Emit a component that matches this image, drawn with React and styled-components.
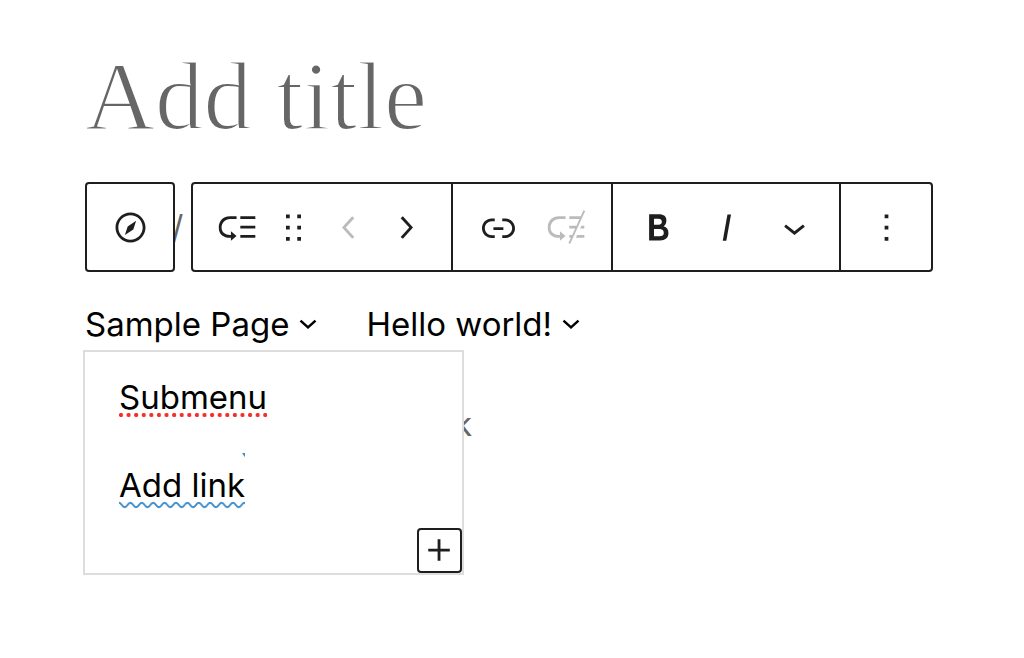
import React from "react";
import styled, { createGlobalStyle } from "styled-components";

const icons = {
  navigation:
    "M12 4c-4.4 0-8 3.6-8 8s3.6 8 8 8 8-3.6 8-8-3.6-8-8-8zm0 14.5c-3.6 0-6.5-2.9-6.5-6.5S8.4 5.5 12 5.5s6.5 2.9 6.5 6.5-2.9 6.5-6.5 6.5zM9 16l4.5-3L15 8.4l-4.5 3L9 16z",
  addSubmenu:
    "M2 12c0 3.6 2.4 5.5 6 5.5h.5V19l3-2.5-3-2.5v2H8c-2.5 0-4.5-1.5-4.5-4s2-4.5 4.5-4.5h3.5V6H8c-3.6 0-6 2.4-6 6zm19.5-1h-8v1.5h8V11zm0 5h-8v1.5h8V16zm0-10h-8v1.5h8V6z",
  removeSubmenu:
    "m13.955 20.748 8-17.5-.91-.416L19.597 6H13.5v1.5h5.411l-1.6 3.5H13.5v1.5h3.126l-1.6 3.5H13.5l.028 1.5h.812l-1.295 2.832.91.416ZM17.675 16l-.686 1.5h4.539L21.5 16h-3.825Zm2.286-5-.686 1.5H21.5V11h-1.54ZM2 12c0 3.58 2.42 5.5 6 5.5h.5V19l3-2.5-3-2.5v2H8c-2.48 0-4.5-1.52-4.5-4S5.52 7.5 8 7.5h3.5V6H8c-3.58 0-6 2.42-6 6Z",
  drag: "M8 7h2V5H8v2zm0 6h2v-2H8v2zm0 6h2v-2H8v2zm6-14v2h2V5h-2zm0 8h2v-2h-2v2zm0 6h2v-2h-2v2z",
  left: "M14.6 7l-1.2-1L8 12l5.4 6 1.2-1-4.6-5z",
  right: "M10.6 6L9.4 7l4.6 5-4.6 5 1.2 1 5.4-6z",
  link: "M15.6 7.2H14v1.5h1.6c2 0 3.7 1.7 3.7 3.7s-1.7 3.7-3.7 3.7H14v1.5h1.6c2.8 0 5.2-2.3 5.2-5.2 0-2.9-2.3-5.2-5.2-5.2zM4.7 12.4c0-2 1.7-3.7 3.7-3.7H10V7.2H8.4c-2.9 0-5.2 2.3-5.2 5.2 0 2.9 2.3 5.2 5.2 5.2H10v-1.5H8.4c-2 0-3.7-1.7-3.7-3.7zm4.6.9h5.3v-1.5H9.3v1.5z",
  bold: "M14.7 11.3c1-.6 1.5-1.6 1.5-3 0-2.3-1.3-3.4-4-3.4H7v14h5.8c1.4 0 2.5-.3 3.3-1 .8-.7 1.2-1.7 1.2-2.9.1-1.9-.8-3.1-2.6-3.7zm-5.1-4h2.3c.6 0 1.1.1 1.4.4.3.3.5.7.5 1.2s-.2 1-.5 1.2c-.3.3-.8.4-1.4.4H9.6V7.3zm4.6 9c-.4.3-1 .4-1.7.4H9.6v-3.9h2.9c.7 0 1.3.2 1.7.5.4.3.6.8.6 1.5s-.2 1.2-.6 1.5z",
  italic: "M12.5 5L10 19h1.9l2.5-14z",
  down: "M17.5 11.6L12 16l-5.5-4.4.9-1.2L12 14l4.5-3.6 1 1.2z",
  more: "M13 19h-2v-2h2v2zm0-6h-2v-2h2v2zm0-6h-2V5h2v2z",
  plus: "M11 12.5V17.5H12.5V12.5H17.5V11H12.5V6H11V11H6V12.5H11Z",
};

const groups = [
  {
    compact: true,
    items: [
      { icon: "addSubmenu", label: "Add submenu" },
      { icon: "drag", label: "Drag" },
      { icon: "left", label: "Move left", disabled: true },
      { icon: "right", label: "Move right" },
    ],
  },
  {
    items: [
      { icon: "link", label: "Link" },
      { icon: "removeSubmenu", label: "Remove submenu", disabled: true },
    ],
  },
  {
    items: [
      { icon: "bold", label: "Bold" },
      { icon: "italic", label: "Italic" },
      { icon: "down", label: "More formats" },
    ],
  },
  { items: [{ icon: "more", label: "Options" }] },
];

const Icon = ({ name }) => (
  <IconSvg viewBox="0 0 24 24" aria-hidden="true">
    <path d={icons[name]} />
  </IconSvg>
);

const Caret = () => (
  <CaretSvg viewBox="0 0 12 12" aria-hidden="true">
    <path d="M1.5 4L6 8L10.5 4" />
  </CaretSvg>
);

const App = () => {
  return (
    <Editor>
      <GlobalStyle />
      <Title type="text" placeholder="Add title" aria-label="Add title" />

      <BlockRow>
        <Placeholder>Type / to choose a block</Placeholder>
        <Toolbar role="toolbar" aria-label="Block tools">
          <ToolbarBox>
            <ParentButton type="button" aria-label="Select Navigation">
              <Icon name="navigation" />
            </ParentButton>
          </ToolbarBox>
          <ToolbarBox>
            {groups.map((group, i) => (
              <ToolbarGroup key={i} $compact={group.compact}>
                {group.items.map((item) => (
                  <ToolButton
                    key={item.icon}
                    type="button"
                    aria-label={item.label}
                    disabled={item.disabled}
                    $compact={group.compact}
                  >
                    <Icon name={item.icon} />
                  </ToolButton>
                ))}
              </ToolbarGroup>
            ))}
          </ToolbarBox>
        </Toolbar>
      </BlockRow>

      <Nav>
        <NavLink href="#sample-page">
          Sample Page
          <Caret />
        </NavLink>
        <NavLink href="#hello-world">
          Hello world!
          <Caret />
        </NavLink>
      </Nav>

      <Below>
        <Submenu>
          <SubmenuLink href="#submenu">
            Submenu
            <DottedLine />
          </SubmenuLink>
          <SubmenuLink href="#add-link">
            Add link
            <WavyLine aria-hidden="true">
              <defs>
                <pattern
                  id="wave"
                  width="11.4"
                  height="8"
                  patternUnits="userSpaceOnUse"
                >
                  <path d="M-2.85 4Q0 -0.4 2.85 4T8.55 4T14.25 4" />
                </pattern>
              </defs>
              <rect width="100%" height="8" fill="url(#wave)" />
            </WavyLine>
            <Tick viewBox="0 0 3 4" aria-hidden="true">
              <path d="M0 0h3v4l-1-1z" />
            </Tick>
          </SubmenuLink>
          <AddButton type="button" aria-label="Add block">
            <Icon name="plus" />
          </AddButton>
        </Submenu>
        <Placeholder>k</Placeholder>
      </Below>
    </Editor>
  );
};

const GlobalStyle = createGlobalStyle`
  * {
    box-sizing: border-box;
  }

  body {
    margin: 0;
    background-color: #fff;
    color: #000;
    font-family: Inter, "Liberation Sans", sans-serif;
    font-size: 33px;
    line-height: 48px;
  }
`;

const Editor = styled.main`
  padding: 40px 84px 0 85px;
`;

const Title = styled.input`
  display: block;
  width: 100%;
  height: 112px;
  margin-bottom: 30px;
  padding: 0;
  border: none;
  outline: none;
  background: none;
  font-family: "Liberation Serif", serif;
  font-size: 97px;
  font-weight: 300;

  /* a background-coloured outline gives the letters a lighter weight */
  &::placeholder {
    color: #666;
    opacity: 1;
    -webkit-text-stroke: 2px #fff;
  }
`;

/* the toolbar covers the paragraph it belongs to */
const BlockRow = styled.div`
  display: grid;
  align-items: center;

  > * {
    grid-area: 1 / 1;
  }
`;

const Placeholder = styled.p`
  margin: 0;
  color: #666;
  white-space: nowrap;
`;

const Toolbar = styled.div`
  display: flex;
  gap: 16px;
  z-index: 1;
`;

const ToolbarBox = styled.div`
  display: flex;
  height: 90px;
  background-color: #fff;
  border: 2px solid #1e1e1e;
  border-radius: 4px;
`;

const ToolbarGroup = styled.div`
  display: flex;
  padding: ${(props) => (props.$compact ? "0 18px 0 16px" : "0 11px")};

  & + & {
    border-left: 2px solid #1e1e1e;
  }
`;

const IconButton = styled.button`
  display: flex;
  justify-content: center;
  align-items: center;
  padding: 0;
  border: none;
  background: none;
  color: #1e1e1e;
  cursor: pointer;
`;

const ParentButton = styled(IconButton)`
  width: 86px;
`;

const ToolButton = styled(IconButton)`
  width: ${(props) => (props.$compact ? 56 : 68)}px;

  &:disabled {
    color: #bbb;
    cursor: default;
  }
`;

const IconSvg = styled.svg`
  width: 45px;
  height: 45px;
  flex: none;
  fill: currentColor;
`;

const CaretSvg = styled.svg`
  width: 20px;
  height: 20px;
  fill: none;
  stroke: currentColor;
  stroke-width: 1.5;
`;

const Nav = styled.nav`
  display: flex;
  gap: 48px;
  margin-top: 28px;
`;

const NavLink = styled.a`
  display: flex;
  align-items: center;
  gap: 9px;
  color: inherit;
  text-decoration: none;
`;

const Below = styled.div`
  display: flex;
  align-items: flex-start;
  margin: 2px 0 0 -2px;

  ${Placeholder} {
    margin: 50px 0 0 -10px;
  }
`;

const Submenu = styled.div`
  display: flex;
  flex-direction: column;
  align-items: flex-start;
  gap: 40px;
  width: 381px;
  height: 225px;
  padding: 21px 0 0 34px;
  z-index: 1;
  position: relative;
  background-color: #fff;
  border: 2px solid #ddd;
`;

const SubmenuLink = styled.a`
  position: relative;
  color: inherit;
  text-decoration: none;
`;

const DottedLine = styled.span`
  position: absolute;
  left: 0;
  right: 0;
  bottom: 4px;
  height: 4px;
  background: radial-gradient(circle at 2px 2px, #f0312b 1.8px, transparent 2.4px)
    0 0 / 7.6px 4px repeat-x;
`;

const WavyLine = styled.svg`
  position: absolute;
  left: 0;
  bottom: 0;
  width: 100%;
  height: 8px;
  fill: none;

  path {
    stroke: #3f8fcb;
    stroke-width: 2;
  }
`;

const Tick = styled.svg`
  position: absolute;
  top: -8px;
  right: 0;
  width: 3px;
  height: 4px;
  fill: #3f8fcb;
`;

const AddButton = styled(IconButton)`
  position: absolute;
  right: 0;
  bottom: 0;
  width: 45px;
  height: 45px;
  background-color: #fff;
  border: 2px solid #1e1e1e;
  border-radius: 4px;
`;

export default App;
